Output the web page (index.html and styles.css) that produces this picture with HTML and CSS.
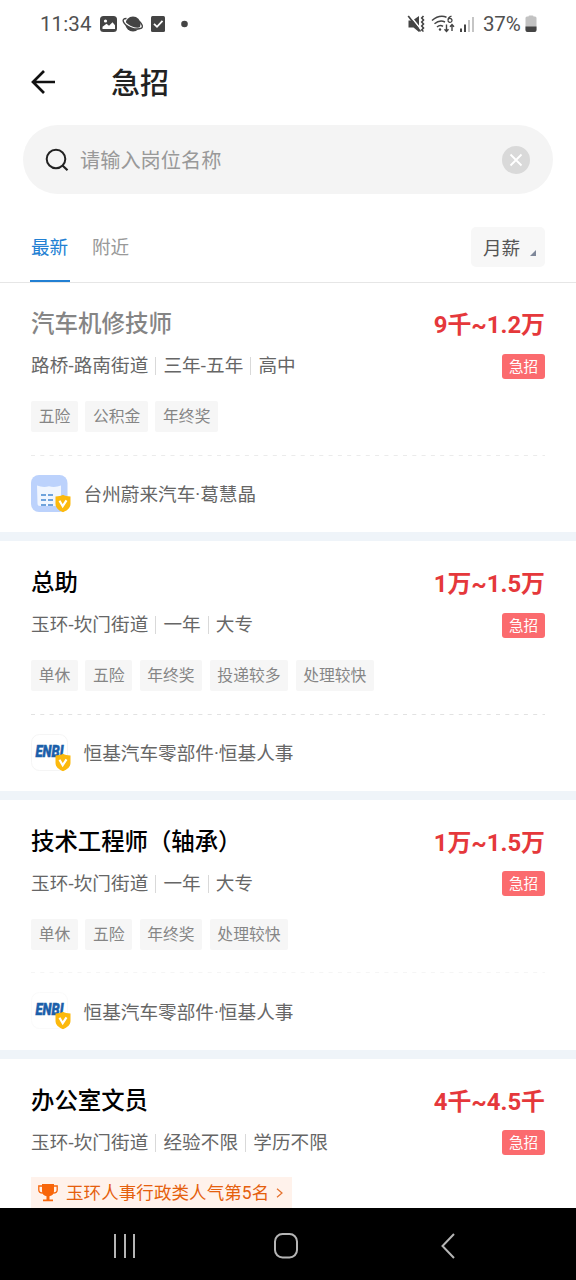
FILE: index.html
```html
<!DOCTYPE html>
<html lang="zh-CN">
<head>
<meta charset="utf-8">
<title>急招</title>
<link rel="stylesheet" href="styles.css">
</head>
<body>
<svg class="defs" width="0" height="0" aria-hidden="true">
  <symbol id="shield" viewBox="0 0 16 18">
    <path d="M8 .3C9.8 1.6 12.400 2 15.500 2v7.500c0 3.800-3.200 6.500-7.500 8.200C3.700 16 .5 13.300.5 9.500V2C3.600 2 6.200 1.600 8 .3z" fill="#fcb90d"/>
    <path d="M4.500 6.300l3.200 5.400 3.800-5.900" fill="none" stroke="#fff" stroke-width="2.200"/>
  </symbol>
</svg>
<div class="phone">
  <div class="status">
    <span class="time">11:34</span>
    <svg class="status-left" width="92" height="20" viewBox="0 0 92 20">
      <rect x="1" y="2" width="17" height="16" rx="3.500" fill="#444"/>
      <circle cx="6.500" cy="7" r="1.600" fill="#fff"/>
      <path d="M3.500 15v-2.300l4-3 2.500 2 3.500-3.500 2.500 3V15z" fill="#fff"/>
      <circle cx="34" cy="10" r="7.600" fill="#444"/>
      <path d="M25.500 5.500Q24 9 31 12.500T42.500 13.500" fill="none" stroke="#fff" stroke-width="1.800"/>
      <path d="M27.500 4.500Q23 4.500 24.500 8T32 13.800T42.500 14.200Q45 12 40.500 7.500" fill="none" stroke="#444" stroke-width="1.400"/>
      <rect x="52" y="2" width="14" height="16" rx="1.500" fill="#444"/>
      <path d="M55 9.800l3 3 5.500-6" fill="none" stroke="#fff" stroke-width="1.800"/>
      <circle cx="85.500" cy="10" r="3.300" fill="#444"/>
    </svg>
    <span class="spacer"></span>
    <svg class="status-right" width="70" height="20" viewBox="0 0 70 20">
      <path d="M1.500 6.500h4L12 2v16L6.500 13.500h-5z" fill="#444"/>
      <path d="M2.500 1l12 15" stroke="#fff" stroke-width="1.600"/>
      <path d="M1.200 2l12.300 15.500" stroke="#444" stroke-width="1.700"/>
      <path d="M16.500 2l-1.800 2 1.800 2-1.800 2 1.800 2-1.800 2 1.800 2-1.800 2 1.800 1.500" fill="none" stroke="#444" stroke-width="1.600"/>
      <path d="M25 6.500Q32 .5 39.500 3.200M27.500 9.800Q32.500 5.500 38 8M30 13q3-2.800 6-.7" fill="none" stroke="#444" stroke-width="1.500"/>
      <circle cx="33" cy="15.500" r="1.200" fill="#444"/>
      <path d="M44.500 2.200q-3.500 1-3.500 4a2 2 0 1 0 2-1.800q-1.600 0-2 1.800" fill="none" stroke="#444" stroke-width="1.300"/>
      <path d="M39.500 10.500v7m-2-2.300l2 2.300 2-2.300M45 17v-6.500m-2 2.300l2-2.300 2 2.300" fill="none" stroke="#444" stroke-width="1.400"/>
      <path d="M54 18v-3.500" stroke="#444" stroke-width="2"/>
      <path d="M58 18v-7.500" stroke="#444" stroke-width="2"/>
      <path d="M62 18V6M66 18V3" stroke="#c5c5c5" stroke-width="2"/>
    </svg>
    <span class="percent">37%</span>
    <svg class="battery" width="12" height="18" viewBox="0 0 12 18">
      <path d="M3.500 1.500Q3.500.5 4.500.5h3q1 0 1 1H10q1.500 0 1.500 1.500v12q0 2-2 2h-7q-2 0-2-2V3Q.5 1.500 2 1.500z" fill="#c2c2c2"/>
      <path d="M.5 11.500h11V15q0 2-2 2h-7q-2 0-2-2z" fill="#444"/>
    </svg>
  </div>

  <div class="appbar">
    <svg class="back" width="26" height="26" viewBox="0 0 26 26"><path d="M25 13H2.500M14 2L3 13l11 11" fill="none" stroke="#111" stroke-width="2.700"/></svg>
    <h1 class="page-title">急招</h1>
  </div>

  <div class="search">
    <svg width="24" height="24" viewBox="0 0 24 24"><circle cx="11" cy="11" r="9.300" fill="none" stroke="#222" stroke-width="2"/><path d="M17.500 17.500l5 4.800" stroke="#222" stroke-width="2.200"/></svg>
    <span class="placeholder">请输入岗位名称</span>
    <svg width="28" height="28" viewBox="0 0 28 28"><circle cx="14" cy="14" r="14" fill="#d9d9d9"/><path d="M8.500 8.500l11 11M19.500 8.500l-11 11" stroke="#fff" stroke-width="1.800"/></svg>
  </div>

  <div class="tabs">
    <span class="tab active">最新</span>
    <span class="tab">附近</span>
    <span class="spacer"></span>
    <span class="filter">月薪<svg width="6" height="6" viewBox="0 0 6 6"><path d="M6 0v6H0z" fill="#7e8799"/></svg></span>
  </div>

  <main class="list">
    <section class="card">
      <div class="row head"><h2 class="job visited">汽车机修技师</h2><span class="salary">9千~1.2万</span></div>
      <div class="row info"><div class="meta"><span>路桥-路南街道</span><span>三年-五年</span><span>高中</span></div><span class="urgent">急招</span></div>
      <div class="tags"><span>五险</span><span>公积金</span><span>年终奖</span></div>
      <svg class="dash light" width="514" height="1"><path d="M0 .5h514"/></svg>
      <div class="company">
        <svg width="40" height="38" viewBox="0 0 40 38">
          <rect width="36.500" height="37" rx="8" fill="#bcd2fc"/>
          <path d="M6 10.500q6 2.500 12 .8 6 1.700 12-.8V31H9q-2.500 0-2.500-2.500z" fill="#f1f6ff"/>
          <path d="M10 20h5M17 20h5M10 25h5M17 25h5M10 30h5M17 30h5" stroke="#6fa3dc" stroke-width="1.800"/>
          <use href="#shield" x="24" y="19.500" width="16" height="18"/>
        </svg>
        <span>台州蔚来汽车·葛慧晶</span>
      </div>
    </section>

    <section class="card">
      <div class="row head"><h2 class="job">总助</h2><span class="salary">1万~1.5万</span></div>
      <div class="row info"><div class="meta"><span>玉环-坎门街道</span><span>一年</span><span>大专</span></div><span class="urgent">急招</span></div>
      <div class="tags"><span>单休</span><span>五险</span><span>年终奖</span><span>投递较多</span><span>处理较快</span></div>
      <svg class="dash" width="514" height="1"><path d="M0 .5h514"/></svg>
      <div class="company">
        <svg width="40" height="38" viewBox="0 0 40 38">
          <rect x=".5" y=".5" width="36" height="36" rx="8" fill="#fff" stroke="#f5f5f5"/>
          <text x="4.500" y="22.800" class="logo-text" textLength="28" lengthAdjust="spacingAndGlyphs">ENBI</text>
          <use href="#shield" x="24" y="19.500" width="16" height="18"/>
        </svg>
        <span>恒基汽车零部件·恒基人事</span>
      </div>
    </section>

    <section class="card">
      <div class="row head"><h2 class="job">技术工程师（轴承）</h2><span class="salary">1万~1.5万</span></div>
      <div class="row info"><div class="meta"><span>玉环-坎门街道</span><span>一年</span><span>大专</span></div><span class="urgent">急招</span></div>
      <div class="tags"><span>单休</span><span>五险</span><span>年终奖</span><span>处理较快</span></div>
      <svg class="dash faint" width="514" height="1"><path d="M0 .5h514"/></svg>
      <div class="company">
        <svg width="40" height="38" viewBox="0 0 40 38">
          <rect x=".5" y=".5" width="36" height="36" rx="8" fill="#fff" stroke="#fafafa"/>
          <text x="4.500" y="22.800" class="logo-text" textLength="28" lengthAdjust="spacingAndGlyphs">ENBI</text>
          <use href="#shield" x="24" y="19.500" width="16" height="18"/>
        </svg>
        <span>恒基汽车零部件·恒基人事</span>
      </div>
    </section>

    <section class="card">
      <div class="row head"><h2 class="job">办公室文员</h2><span class="salary">4千~4.5千</span></div>
      <div class="row info"><div class="meta"><span>玉环-坎门街道</span><span>经验不限</span><span>学历不限</span></div><span class="urgent">急招</span></div>
      <div class="rank">
        <svg width="20" height="18" viewBox="0 0 20 18"><path d="M4 0h12v7q0 4.500-4.500 5.200V15.500H15v1.700H5v-1.700h3.500v-3.300Q4 11.500 4 7z" fill="#f8660a"/><path d="M4.500 2H.8v4q0 3 4 3M15.500 2h3.700v4q0 3-4 3" fill="none" stroke="#f8660a" stroke-width="1.300"/></svg>
        <span>玉环人事行政类人气第5名</span>
        <svg width="7" height="10" viewBox="0 0 7 10"><path d="M1 .8L6 5 1 9.200" fill="none" stroke="#e5702c" stroke-width="1.200"/></svg>
      </div>
    </section>
  </main>

  <nav class="navbar">
    <svg width="24" height="26" viewBox="0 0 24 26"><path d="M2 1v24M12 1v24M21 1v24" stroke="#b5b5b5" stroke-width="2"/></svg>
    <svg class="home" width="26" height="28" viewBox="0 0 26 28"><rect x="2" y="2" width="22" height="23.500" rx="7.500" fill="none" stroke="#b5b5b5" stroke-width="2"/></svg>
    <svg width="16" height="28" viewBox="0 0 16 28"><path d="M14 2L2.500 14 14 26" fill="none" stroke="#b5b5b5" stroke-width="2"/></svg>
  </nav>
</div>
</body>
</html>
```

FILE: styles.css
```css
* { box-sizing: border-box; }
body { margin: 0; background: #fff; font-family: Roboto, "Noto Sans CJK SC", sans-serif; color: #666; }
svg { display: block; flex: none; }
h1, h2 { margin: 0; }
.defs { position: absolute; }
.phone { width: 576px; height: 1280px; display: flex; flex-direction: column; overflow: hidden; }
.spacer { flex: 1; }

.status { height: 48px; flex: none; display: flex; align-items: center; padding: 0 39.500px 0 40px; font-size: 20.500px; color: #505050; white-space: nowrap; }
.time { width: 52px; letter-spacing: .1px; }
.status-left { margin-left: 7px; }
.percent { width: 38px; margin-left: 6px; letter-spacing: -.2px; }
.battery { margin-left: 3.500px; }

.appbar { height: 77px; flex: none; display: flex; align-items: center; padding: 0 30px 8px; }
.back { margin-top: -1px; }
.page-title { margin: 2px 0 0 55px; font-size: 29px; font-weight: 500; line-height: 40px; color: #222; }

.search { height: 69px; flex: none; margin: 0 23px; padding: 0 23px 0 22px; border-radius: 35px; background: #f4f4f4; display: flex; align-items: center; }
.placeholder { flex: 1; margin: 2px 0 0 11px; font-size: 20.200px; line-height: 30px; color: #999; }

.tabs { height: 89px; flex: none; padding: 33px 31px 0; border-bottom: 1px solid #e6e6e6; display: flex; align-items: flex-start; font-size: 18.600px; }
.tab { height: 55px; line-height: 42px; margin-right: 22px; color: #999; }
.tab.active { width: 40px; margin-left: -1px; padding-left: 1px; color: #2280d3; border-bottom: 2px solid #2280d3; }
.filter { width: 74px; height: 40px; border-radius: 5px; background: #f7f7f7; padding: 0 0 2px 12px; display: flex; align-items: center; color: #555; }
.filter svg { margin: 13px 0 0 10px; }

.list { flex: 1; min-height: 0; overflow: hidden; }
.card { height: 258.750px; padding: 24px 31px 0; border-bottom: 9px solid #eff4f9; }
.card:first-child { height: 258px; padding-top: 23px; }
.row { display: flex; justify-content: space-between; align-items: center; }
.head { height: 36px; }
.job { font-size: 23.400px; font-weight: 500; line-height: 34px; color: #000; }
.job.visited { font-size: 23.500px; color: #858585; }
.salary { font-size: 23.900px; font-weight: 700; line-height: 34px; margin-top: 2px; color: #e5383b; }
.info { height: 48px; }
.meta { display: flex; align-items: center; font-size: 18.600px; letter-spacing: .1px; line-height: 28px; }
.meta span + span { margin-left: 7px; padding-left: 8px; background: linear-gradient(#d9d9d9, #d9d9d9) 0 50% / 1px 18px no-repeat; }
.urgent { width: 43px; height: 25px; border-radius: 3px; background: #fb6b6e; color: #fff; font-size: 14.600px; line-height: 26px; text-align: center; }
.tags { display: flex; gap: 7.300px; margin-top: 11px; }
.tags span { height: 31px; padding: 0 7.700px; border-radius: 2px; background: #f6f6f6; color: #858585; font-size: 15.800px; line-height: 31px; }
.dash { margin-top: 22.500px; }
.dash path { stroke: #e2e2e2; stroke-width: 1px; stroke-dasharray: 4 5.300; }
.dash.light path { stroke: #ebebeb; }
.dash.faint path { stroke: #f5f5f5; }
.company { display: flex; align-items: center; margin-top: 19px; gap: 12.500px; font-size: 18.650px; line-height: 38px; height: 38px; }
.company span { padding-top: 3px; }
.logo-text { font: italic 900 16px Roboto, sans-serif; fill: #1b5faa; stroke: #1b5faa; stroke-width: .5px; }
.rank { width: 261px; height: 31px; margin-top: 10.500px; padding-left: 7px; display: flex; align-items: center; background: #fff2eb; color: #e5600d; font-size: 17.500px; line-height: 31px; white-space: nowrap; }
.rank span { margin: 1px 7px 0 8px; letter-spacing: .08px; }

.navbar { height: 72px; flex: none; background: #000; display: flex; align-items: center; justify-content: space-between; padding: 4px 120px 0 113px; }
.home { margin-right: 6px; }
```
